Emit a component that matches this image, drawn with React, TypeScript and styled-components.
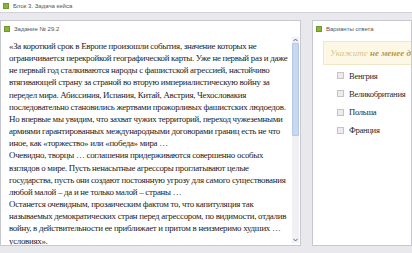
import React from 'react'
import styled, { createGlobalStyle } from 'styled-components'

const GlobalStyle = createGlobalStyle`
    html, body {
        margin: 0;
        padding: 0;
        background: #e8e8ed;
        overflow: hidden;
    }
`;

const Page = styled.div`
    width: 412px;
    height: 253px;
    display: flex;
    flex-direction: column;
    background: #e8e8ed;
    font-family: "Liberation Sans", Arial, sans-serif;
`;

const TopBar = styled.div`
    height: 12px;
    background: #fff;
    border-bottom: 1px solid #d2d2d8;
    display: flex;
    align-items: center;
    gap: 4px;
    padding-left: 3px;
`;

const Marker = styled.span`
    width: 4px;
    height: 4px;
    background: #8cb43c;
    border: 0.5px solid #6f9a2a;
    flex: none;
`;

const SmallTitle = styled.span`
    font-size: 6px;
    color: #555;
    line-height: 1;
`;

const Columns = styled.div`
    flex: 1;
    display: flex;
    gap: 11px;
    padding-top: 7px;
    min-height: 0;
`;

const Panel = styled.section<{ $width?: number }>`
    ${p => p.$width ? `width: ${p.$width}px;` : 'flex: 1; min-width: 0;'}
    height: 226px;
    background: #fff;
    border: 1px solid #c8c8d0;
    display: flex;
    flex-direction: column;
    box-sizing: border-box;
    overflow: hidden;
`;

const PanelHeader = styled.div`
    height: 16px;
    display: flex;
    align-items: center;
    gap: 4px;
    padding-left: 3px;
    flex: none;
`;

const Content = styled.div`
    flex: 1;
    display: flex;
    min-height: 0;
`;

const TextCol = styled.div`
    flex: 1;
    min-width: 0;
    padding: 3px 0 0 8px;
    font-family: "Liberation Serif", "Times New Roman", serif;
    font-size: 8.9px;
    letter-spacing: -0.28px;
    line-height: 12.15px;
    color: #1c1c1c;
`;

const Line = styled.div`
    white-space: nowrap;
`;

const Scrollbar = styled.div`
    width: 7px;
    flex: none;
    margin: 0 1px 2px 0;
    background: #f1f1f3;
    display: flex;
    flex-direction: column;
`;

const Arrow = styled.div`
    height: 6px;
    display: flex;
    align-items: center;
    justify-content: center;
    flex: none;
`;

const Thumb = styled.div`
    height: 93px;
    background: #c9d8f0;
    border: 1px solid #b5c7e6;
    box-sizing: border-box;
    border-radius: 1px;
`;

const Track = styled.div`
    flex: 1;
`;

const Hint = styled.div`
    margin: 4px 0 0 10px;
    height: 22px;
    background: #fdf8e6;
    border: 1px solid #f1e7c6;
    border-right: none;
    display: flex;
    align-items: center;
    padding-left: 6px;
    font-family: "Liberation Serif", "Times New Roman", serif;
    font-style: italic;
    font-size: 9px;
    color: #d8c48a;
    white-space: nowrap;
    overflow: hidden;
    b {
        color: #b89a48;
    }
`;

const Options = styled.div`
    display: flex;
    flex-direction: column;
    gap: 7.3px;
    padding: 5px 0 0 24px;
`;

const Option = styled.label`
    display: flex;
    align-items: center;
    gap: 5px;
    height: 11px;
    font-family: "Liberation Serif", "Times New Roman", serif;
    font-size: 8.6px;
    letter-spacing: -0.3px;
    color: #2a2a2a;
    white-space: nowrap;
`;

const Box = styled.span`
    width: 5px;
    height: 5px;
    border: 1px solid #c4c4c8;
    background: #ececee;
`;

const lines = [
    '«За короткий срок в Европе произошли события, значение которых не',
    'ограничивается перекройкой географической карты. Уже не первый раз и даже',
    'не первый год сталкиваются народы с фашистской агрессией, настойчиво',
    'втягивающей страну за страной во вторую империалистическую войну за',
    'передел мира. Абиссиния, Испания, Китай, Австрия, Чехословакия',
    'последовательно становились жертвами прожорливых фашистских людоедов.',
    'Но впервые мы увидим, что захват чужих территорий, переход чужеземными',
    'армиями гарантированных международными договорами границ есть не что',
    'иное, как «торжество» или «победа» мира …',
    'Очевидно, творцы … соглашения придерживаются совершенно особых',
    'взглядов о мире. Пусть ненасытные агрессоры проглатывают целые',
    'государства, пусть они создают постоянную угрозу для самого существования',
    'любой малой – да и не только малой – страны …',
    'Останется очевидным, прозаическим фактом то, что капитуляция так',
    'называемых демократических стран перед агрессором, по видимости, отдалив',
    'войну, в действительности ее приближает и притом в неизмеримо худших …',
    'условиях».',
];

const answers = ['Венгрия', 'Великобритания', 'Польша', 'Франция'];

const Tri = ({ up }: { up?: boolean }) => (
    <svg width="5" height="4" viewBox="0 0 5 4">
        <path d={up ? 'M0.5 3.2 L2.5 1 L4.5 3.2' : 'M0.5 0.8 L2.5 3 L4.5 0.8'} fill="none" stroke="#4d6fa8" strokeWidth="1" />
    </svg>
);

export default function App() {
    return (
        <Page>
            <GlobalStyle />
            <TopBar>
                <Marker />
                <SmallTitle>Блок 3. Задача кейса</SmallTitle>
            </TopBar>
            <Columns>
                <Panel $width={301}>
                    <PanelHeader>
                        <Marker />
                        <SmallTitle>Задание № 29.2</SmallTitle>
                    </PanelHeader>
                    <Content>
                        <TextCol>
                            {lines.map((l, i) => <Line key={i}>{l}</Line>)}
                        </TextCol>
                        <Scrollbar>
                            <Arrow><Tri up /></Arrow>
                            <Thumb />
                            <Track />
                            <Arrow><Tri /></Arrow>
                        </Scrollbar>
                    </Content>
                </Panel>
                <Panel>
                    <PanelHeader>
                        <Marker />
                        <SmallTitle>Варианты ответа</SmallTitle>
                    </PanelHeader>
                    <Hint>Укажите <b>&nbsp;не менее двух вариантов ответа</b></Hint>
                    <Options>
                        {answers.map(a => (
                            <Option key={a}><Box />{a}</Option>
                        ))}
                    </Options>
                </Panel>
            </Columns>
        </Page>
    )
}
